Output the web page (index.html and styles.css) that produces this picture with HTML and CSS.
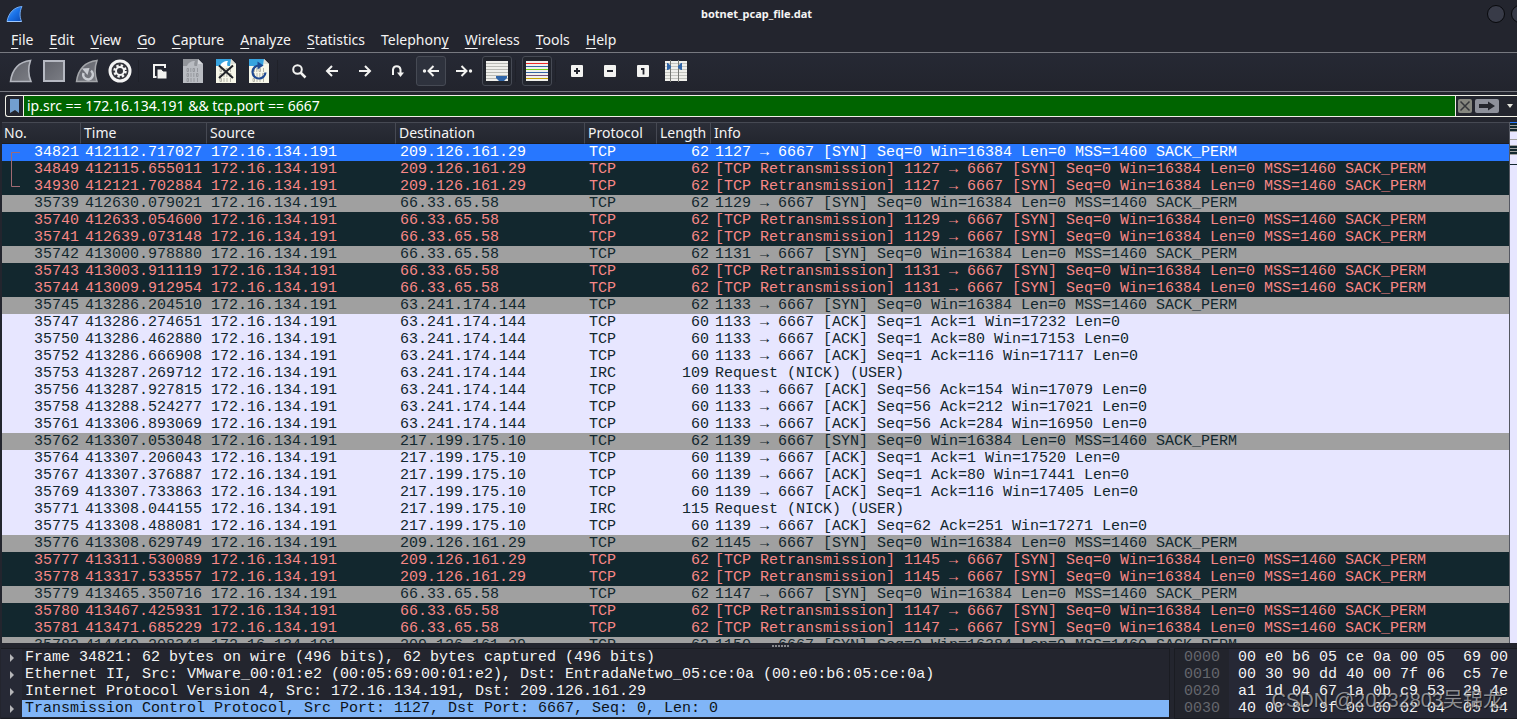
FILE: index.html
```html
<!DOCTYPE html>
<html lang="en">
<head>
<meta charset="utf-8">
<title>botnet_pcap_file.dat</title>
<link rel="stylesheet" href="styles.css">
</head>
<body>
<svg width="0" height="0" class="defs" aria-hidden="true">
  <defs>
    <linearGradient id="fin-blue" x1="0" y1="0" x2="1" y2="1"><stop offset="0" stop-color="#5aa8f5"/><stop offset=".5" stop-color="#1a72e8"/><stop offset="1" stop-color="#0a49b4"/></linearGradient>
    <linearGradient id="steel" x1="0" y1="0" x2="1" y2="1"><stop offset="0" stop-color="#60626a"/><stop offset="1" stop-color="#7b7d84"/></linearGradient>
    <symbol id="bits" viewBox="0 0 24 24">
      <g fill="none" stroke-width=".8">
        <path d="M6 9.500h1.500v3H6zM12 9.500h1.500v3H12zM9.800 9v4M16.500 9v4M6 14.500h1.500v3H6zM15.500 14.500H17v3h-1.500zM10 14v4M12.800 14v4M6 19.500h1.500v3H6zM10 19v4M13 19v4M16.500 19v4"/>
      </g>
    </symbol>
  </defs>
</svg>
<div class="window">
  <header class="titlebar">
    <svg class="logo" viewBox="0 0 18 18"><path d="M1 16.500C2.500 8 8 2 16 1.500c-2.500 5-2.500 10-.5 15z" fill="url(#fin-blue)" stroke="#73a9ee"/><path d="M1 16.500h14.500" stroke="#9ec8ff"/></svg>
    <h1 class="title">botnet_pcap_file.dat</h1>
    <div class="window-buttons"><button aria-label="Minimize"></button><button aria-label="Maximize"></button></div>
  </header>

  <nav class="menubar">
    <button><u>F</u>ile</button><button><u>E</u>dit</button><button><u>V</u>iew</button><button><u>G</u>o</button><button><u>C</u>apture</button><button><u>A</u>nalyze</button><button><u>S</u>tatistics</button><button>Telephon<u>y</u></button><button><u>W</u>ireless</button><button><u>T</u>ools</button><button><u>H</u>elp</button>
  </nav>

  <div class="toolbar">
    <button aria-label="Start capture"><svg viewBox="0 0 24 24"><path d="M1.500 22.500C3 11 9.500 3 21.500 1.500c-2.500 7-2.500 14 .5 21z" fill="url(#steel)" stroke="#b4b7bf" stroke-width="1.600"/></svg></button>
    <button aria-label="Stop capture"><svg viewBox="0 0 24 24"><path d="M2 2h20v20H2z" fill="url(#steel)" stroke="#b6b9c2" stroke-width="2"/></svg></button>
    <button aria-label="Restart capture"><svg viewBox="0 0 24 24"><path d="M1.500 22.500C3 11 9.500 3 22 1.500c-2.500 7-2.500 14 0 21z" fill="url(#steel)" stroke="#a4a6aa" stroke-width="1.500"/><path d="M8.500 14a4.800 4.800 0 1 0 7.500-2.200" fill="none" stroke="#c9ccd2" stroke-width="2.500"/><path d="M7 9.500l7.500-.5-2 7z" fill="#c9ccd2"/></svg></button>
    <button aria-label="Capture options"><svg viewBox="0 0 24 24"><circle cx="12" cy="12" r="10" fill="#33343b" stroke="#f4f4f4" stroke-width="3"/><circle cx="12" cy="12" r="5.500" fill="none" stroke="#f4f4f4" stroke-width="2.500" stroke-dasharray="2.300 2.020"/><circle cx="12" cy="12" r="4" fill="none" stroke="#f4f4f4" stroke-width="2"/></svg></button>
    <span class="sep"></span>
    <button aria-label="Open file"><svg viewBox="0 0 24 24"><path d="M9 18H6V6h11v3" fill="none" stroke="#f3f3f1" stroke-width="2"/><path d="M9 10h4.500l1.500 2h4v8H9z" fill="#f3f3f1" stroke="#23252e"/></svg></button>
    <button aria-label="Save file"><svg viewBox="0 0 24 24"><path d="M2 0h15l5 5v19H2z" fill="#b9bcc2"/><path d="M2 0h15l-1 7H2z" fill="#92959b"/><path d="M6 7c1-3 4-5 8-5-1 2-1 3-.5 5z" fill="#b9bcc2"/><path d="M17 0v5h5z" fill="#d5d7dc"/><use href="#bits" stroke="#8d9096"/></svg></button>
    <button aria-label="Close file"><svg viewBox="0 0 24 24"><path d="M2 0h15l5 5v19H2z" fill="#f7f7e9"/><path d="M2 0h15l-1 7H2z" fill="#37a3df"/><path d="M6 7c1-3 4-5 8-5-1 2-1 3-.5 5z" fill="#fff"/><path d="M17 0v5h5z" fill="#deded5"/><use href="#bits" stroke="#a4a59a"/><path d="M5 6.500l14 12.500M19 6.500L5 19" stroke="#202328" stroke-width="2"/></svg></button>
    <button aria-label="Reload file"><svg viewBox="0 0 24 24"><path d="M2 0h15l5 5v19H2z" fill="#f7f7e9"/><path d="M2 0h15l-1 7H2z" fill="#37a3df"/><path d="M17 0v5h5z" fill="#deded5"/><use href="#bits" stroke="#a4a59a"/><path d="M12 6.500a6.500 6.500 0 1 0 6.500 7" fill="none" stroke="#1e4a94" stroke-width="2.200"/><path d="M10.500 2.500l6 4-6 4z" fill="#1e4a94"/></svg></button>
    <span class="sep"></span>
    <button aria-label="Find packet"><svg viewBox="0 0 24 24"><circle cx="10.500" cy="10.500" r="4.300" fill="none" stroke="#f3f3f1" stroke-width="2"/><path d="M13.500 13.500l5 5" stroke="#f3f3f1" stroke-width="2.500"/></svg></button>
    <button aria-label="Previous packet"><svg viewBox="0 0 24 24"><path d="M18 12H7.500M12 7l-5 5 5 5" class="line"/></svg></button>
    <button aria-label="Next packet"><svg viewBox="0 0 24 24"><path d="M6 12h10.500M12 7l5 5-5 5" class="line"/></svg></button>
    <button aria-label="Go to packet"><svg viewBox="0 0 24 24"><path d="M7 16v-5.500a3.800 3.800 0 0 1 7.500 0V15" class="line"/><path d="M11 13.500h7L14.500 18z" fill="#f3f3f1"/></svg></button>
    <button class="on" aria-label="First packet"><svg viewBox="0 0 24 24"><circle cx="5.500" cy="12" r="1.700" fill="#f3f3f1"/><path d="M20 12H10M14.500 7l-5 5 5 5" class="line"/></svg></button>
    <button aria-label="Last packet"><svg viewBox="0 0 24 24"><circle cx="18.500" cy="12" r="1.700" fill="#f3f3f1"/><path d="M4 12h10M9.500 7l5 5-5 5" class="line"/></svg></button>
    <button class="on dark" aria-label="Auto scroll"><svg viewBox="0 0 24 24"><path d="M1 2h22v20H1z" fill="#f0f0ec"/><path d="M1 4.500h22M1 7.500h22M1 10.500h22M1 13.500h22M1 16.500h22M1 19.500h22" stroke="#b9bab5"/><path d="M11 17h11v2l-3 3h-5l-3-3z" fill="#2f65a8"/></svg></button>
    <span class="sep"></span>
    <button class="on dark" aria-label="Colorize packets"><svg viewBox="0 0 24 24"><path d="M1 2h22v20H1z" fill="#f0f0ec"/><path d="M1 4.500h22" stroke="#ef2929"/><path d="M1 7.500h22" stroke="#3465a4"/><path d="M1 10.500h22" stroke="#73d216"/><path d="M1 13.500h22" stroke="#3465a4"/><path d="M1 16.500h22" stroke="#75507b"/><path d="M1 19.500h22" stroke="#c4a000"/></svg></button>
    <span class="sep"></span>
    <button aria-label="Zoom in"><svg viewBox="0 0 24 24"><rect x="6" y="6" width="12" height="12" rx="1" fill="#f3f3f1"/><path d="M12 9v6M9 12h6" stroke="#23252e" stroke-width="2"/></svg></button>
    <button aria-label="Zoom out"><svg viewBox="0 0 24 24"><rect x="6" y="6" width="12" height="12" rx="1" fill="#f3f3f1"/><path d="M9 12h6" stroke="#23252e" stroke-width="2"/></svg></button>
    <button aria-label="Normal size"><svg viewBox="0 0 24 24"><rect x="6" y="6" width="12" height="12" rx="1" fill="#f3f3f1"/><path d="M10 10h2.500v5.500" fill="none" stroke="#23252e" stroke-width="1.800"/></svg></button>
    <button aria-label="Resize columns"><svg viewBox="0 0 24 24"><path d="M1 2h22v20H1z" fill="#f0f0ec"/><path d="M1 4.500h22M1 7.500h22M1 10.500h22M1 13.500h22M1 16.500h22M1 19.500h22" stroke="#c3c4bf"/><path d="M6.500 1v22M14.500 1v22" stroke="#777974"/><path d="M3 4h1l3 3v2l-3 2H3zM18 4h-1l-3 3v2l3 2h1z" fill="#2f65a8"/></svg></button>
  </div>

  <form class="filter" onsubmit="return false">
    <button class="bookmark" type="button" aria-label="Bookmarks"><svg viewBox="0 0 17 20"><path d="M4 3h9v14l-4-3-5 3z" fill="#729fcf"/></svg></button>
    <input type="text" aria-label="Display filter" value="ip.src == 172.16.134.191 &amp;&amp; tcp.port == 6667">
    <button class="clear" type="button" aria-label="Clear filter"><svg viewBox="0 0 14 14"><path d="M2.500 2.500l9 9M11.500 2.500l-9 9" stroke="#35373b" stroke-width="1.500"/></svg></button>
    <button class="apply" type="submit" aria-label="Apply filter"><svg viewBox="0 0 24 14"><path d="M4 5h9V2.500L20 7l-7 4.500V9H4z" fill="#25272e"/></svg></button>
    <button class="drop" type="button" aria-label="Recent filters"><svg viewBox="0 0 10 6"><path d="M2 1h6L5 5z" fill="#e4e4dc"/></svg></button>
  </form>

  <main class="packets">
    <div class="list">
      <table>
        <colgroup><col class="c-no"><col class="c-time"><col class="c-addr"><col class="c-addr"><col class="c-proto"><col class="c-len"><col></colgroup>
        <thead><tr><th>No.</th><th>Time</th><th>Source</th><th>Destination</th><th>Protocol</th><th>Length</th><th>Info</th></tr></thead>
        <tbody id="rows"></tbody>
      </table>
      <svg class="related" viewBox="0 0 10 36"><path d="M9 .5H.5v34H9" fill="none" stroke="#a06a72"/></svg>
    </div>
    <div class="minimap"></div>
  </main>

  <div class="splitter"><span></span></div>

  <section class="bottom">
    <ul class="details">
      <li><button aria-label="Expand"></button><span>Frame 34821: 62 bytes on wire (496 bits), 62 bytes captured (496 bits)</span></li>
      <li><button aria-label="Expand"></button><span>Ethernet II, Src: VMware_00:01:e2 (00:05:69:00:01:e2), Dst: EntradaNetwo_05:ce:0a (00:e0:b6:05:ce:0a)</span></li>
      <li><button aria-label="Expand"></button><span>Internet Protocol Version 4, Src: 172.16.134.191, Dst: 209.126.161.29</span></li>
      <li class="current"><button aria-label="Expand"></button><span>Transmission Control Protocol, Src Port: 1127, Dst Port: 6667, Seq: 0, Len: 0</span></li>
    </ul>
    <div class="hex">
      <pre class="offsets">0000
0010
0020
0030</pre>
      <pre class="bytes">00 e0 b6 05 ce 0a 00 05  69 00
00 30 90 dd 40 00 7f 06  c5 7e
a1 1d 04 67 1a 0b c9 53  29 4e
40 00 8c 9f 00 00 02 04  05 b4</pre>
    </div>
  </section>
  <div class="watermark">CSDN @20232803吴锦龙</div>
</div>
<script src="script.js"></script>
</body>
</html>
```
FILE: styles.css
```css
* { box-sizing: border-box; }
body {
  margin: 0;
  background: #23252e;
  color: #f4f4f4;
  font: 14px/20px "Noto Sans", "Open Sans", sans-serif;
}
button { margin: 0; padding: 0; border: 0; background: none; color: inherit; font: inherit; }
svg { display: block; }
.defs { position: absolute; }
.window { position: relative; display: flex; flex-direction: column; height: 100vh; overflow: hidden; }

.titlebar { position: relative; display: flex; align-items: center; justify-content: center; height: 28px; flex: none; }
.logo { position: absolute; left: 6px; top: 5px; width: 18px; height: 18px; }
.title { margin: 0 4px 0 0; font-size: 11px; line-height: 16px; font-weight: 700; }
.window-buttons { position: absolute; right: -12px; top: 5px; display: flex; gap: 6px; }
.window-buttons button { width: 18px; height: 18px; border: 1px solid #08090c; border-radius: 50%; background: #383b48; }

.menubar { display: flex; flex: none; height: 25px; padding-left: 3px; border-bottom: 1px solid #777980; }
.menubar button { padding: 0 8px; height: 24px; line-height: 24px; }
.menubar u { text-underline-offset: 3px; text-decoration-thickness: 1px; }

.toolbar { display: flex; flex: none; align-items: center; gap: 3px; height: 39px; padding: 0 6px 2px; border-bottom: 1px solid #777980; background: linear-gradient(#262934, #22242d); }
.toolbar button { display: flex; align-items: center; justify-content: center; width: 30px; height: 30px; border: 1px solid transparent; border-radius: 3px; }
.toolbar button.on { border-color: #464a54; background: #2e323d; }
.toolbar button.dark { background: #22252d; }
.toolbar svg { flex: none; width: 24px; height: 24px; }
.toolbar .line { fill: none; stroke: #f3f3f1; stroke-width: 2; }
.sep { width: 4px; height: 22px; border-left: 1px solid #1f2129; }

.filter { display: flex; flex: none; align-items: center; height: 22px; margin: 3px 0 5px 5px; border: 1px solid #f0f0e6; border-right: 0; border-radius: 3px 0 0 3px; background: #23252e; }
.filter input { flex: 1; min-width: 0; height: 20px; padding: 0 3px; border: solid #f0f0e6; border-width: 0 1px; outline: 0; background: #006400; color: #fff; font: inherit; }
.bookmark svg { width: 17px; height: 20px; }
.clear { width: 14px; height: 14px; margin-left: 2px; border-radius: 2px; background: #86877f; }
.apply { width: 24px; height: 14px; margin-left: 3px; border-radius: 2px; background: #8e919b; }
.drop { width: 10px; margin: 0 2px 0 6px; }

.packets { display: flex; flex: 1; min-height: 0; padding-left: 2px; }
.list { position: relative; flex: 1; min-width: 0; overflow: hidden; }
table { width: 100%; table-layout: fixed; border-collapse: separate; border-spacing: 0; }
.c-no { width: 79px; }
.c-time { width: 126px; }
.c-addr { width: 189px; }
.c-proto { width: 72px; }
.c-len { width: 54px; }
th { height: 22px; padding: 0 0 0 3px; border-top: 1px solid #464953; border-right: 1px solid #464953; border-bottom: 1px solid #1b1d24; background: linear-gradient(#2b2e38, #23262e); font-weight: 400; text-align: left; line-height: 20px; overflow: hidden; white-space: nowrap; }
th:first-child { padding-left: 2px; }
th:last-child { border-right: 0; }
td { height: 17px; padding: 0 0 0 4px; font: 15px/17px "Liberation Mono", monospace; white-space: pre; overflow: hidden; }
td:nth-child(1), td:nth-child(6) { padding: 0 2px 0 0; text-align: right; }
.retrans td { background: #12272e; color: #f78787; }
.syn td { background: #a0a0a0; color: #12272e; }
.ok td { background: #e7e6ff; color: #12272e; }
.selected td { background: #2777ff; color: #fff; }
.related { position: absolute; left: 9px; top: 30px; width: 10px; height: 36px; }
.minimap {
  width: 8px; border-left: 1px solid #555862;
  background: linear-gradient(#2777ff 0 1px, #12272e 1px 3px, #a0a0a0 3px 4px, #12272e 4px 6px, #a0a0a0 6px 7px, #12272e 7px 9px, #a0a0a0 9px 10px, #e7e6ff 10px 17px, #a0a0a0 17px 18px, #e7e6ff 18px 23px, #a0a0a0 23px 24px, #12272e 24px 26px, #a0a0a0 26px 27px, #12272e 27px 29px, #a0a0a0 29px 30px, #12272e 30px 32px, #a0a0a0 32px 33px, #e7e6ff 33px 42px, #12272e 42px 43px, #e7e6ff 43px);
}

.splitter { display: flex; flex: none; justify-content: center; height: 5px; padding: 2px 0 0 44px; }
.splitter span { width: 17px; height: 2px; background: repeating-linear-gradient(90deg, #85878c 0 2px, transparent 2px 3px); }

.bottom { display: flex; flex: none; gap: 4px; padding-left: 1px; font: 15px/17px "Liberation Mono", monospace; }
.details { flex: 1; min-width: 0; margin: 0; padding: 0 0 1px; list-style: none; border: 1px solid #1a1c22; border-left: 0; }
.details li { display: flex; }
.details li > button { display: flex; align-items: center; width: 21px; height: 17px; padding-left: 9px; background: #262935; }
.details li > button::before { content: ""; border: solid transparent; border-width: 4px 0 4px 4px; border-left-color: #b5b6b9; }
.details span { flex: 1; padding-left: 3px; white-space: pre; overflow: hidden; }
.details .current span { background: #80b5f7; color: #0d1218; }
.hex { display: flex; width: 343px; border: 1px solid #1a1c22; border-right: 0; background: #262835; }
pre { margin: 0; font: inherit; }
.offsets { padding: 0 9px; background: #22242c; color: #65676d; }
.bytes { flex: 1; padding-left: 9px; overflow: hidden; }

.watermark { position: absolute; right: 14px; bottom: 7px; color: rgba(215, 215, 215, .62); font: 20px/24px "Liberation Sans", "Noto Sans CJK SC", sans-serif; text-shadow: 1px 1px 1px rgba(0, 0, 0, .5); pointer-events: none; }
```
FILE: script.js
```js
const hosts = { a: "209.126.161.29", b: "66.33.65.58", c: "63.241.174.144", d: "217.199.175.10" };
const SYN = "[SYN] Seq=0 Win=16384 Len=0 MSS=1460 SACK_PERM";

// Each packet: class, number, time, host key, source port, info (ACK text or IRC length)
const packets = [
  ["selected", 34821, "412112.717027", "a", 1127],
  ["retrans", 34849, "412115.655011", "a", 1127],
  ["retrans", 34930, "412121.702884", "a", 1127],
  ["syn", 35739, "412630.079021", "b", 1129],
  ["retrans", 35740, "412633.054600", "b", 1129],
  ["retrans", 35741, "412639.073148", "b", 1129],
  ["syn", 35742, "413000.978880", "b", 1131],
  ["retrans", 35743, "413003.911119", "b", 1131],
  ["retrans", 35744, "413009.912954", "b", 1131],
  ["syn", 35745, "413286.204510", "c", 1133],
  ["ok", 35747, "413286.274651", "c", 1133, "Seq=1 Ack=1 Win=17232"],
  ["ok", 35750, "413286.462880", "c", 1133, "Seq=1 Ack=80 Win=17153"],
  ["ok", 35752, "413286.666908", "c", 1133, "Seq=1 Ack=116 Win=17117"],
  ["ok", 35753, "413287.269712", "c", 1133, 109],
  ["ok", 35756, "413287.927815", "c", 1133, "Seq=56 Ack=154 Win=17079"],
  ["ok", 35758, "413288.524277", "c", 1133, "Seq=56 Ack=212 Win=17021"],
  ["ok", 35761, "413306.893069", "c", 1133, "Seq=56 Ack=284 Win=16950"],
  ["syn", 35762, "413307.053048", "d", 1139],
  ["ok", 35764, "413307.206043", "d", 1139, "Seq=1 Ack=1 Win=17520"],
  ["ok", 35767, "413307.376887", "d", 1139, "Seq=1 Ack=80 Win=17441"],
  ["ok", 35769, "413307.733863", "d", 1139, "Seq=1 Ack=116 Win=17405"],
  ["ok", 35771, "413308.044155", "d", 1139, 115],
  ["ok", 35775, "413308.488081", "d", 1139, "Seq=62 Ack=251 Win=17271"],
  ["syn", 35776, "413308.629749", "a", 1145],
  ["retrans", 35777, "413311.530089", "a", 1145],
  ["retrans", 35778, "413317.533557", "a", 1145],
  ["syn", 35779, "413465.350716", "b", 1147],
  ["retrans", 35780, "413467.425931", "b", 1147],
  ["retrans", 35781, "413471.685229", "b", 1147],
  ["syn", 35782, "414410.208341", "a", 1150]
];

const body = document.getElementById("rows");
for (const [kind, no, time, host, port, extra] of packets) {
  const irc = typeof extra === "number";
  const flow = `${port} → 6667 `;
  let info = flow + SYN;
  if (kind === "retrans") info = "[TCP Retransmission] " + info;
  if (kind === "ok") info = irc ? "Request (NICK) (USER)" : `${flow}[ACK] ${extra} Len=0`;
  const row = body.insertRow();
  row.className = kind;
  const length = irc ? extra : kind === "ok" ? 60 : 62;
  for (const value of [no, time, "172.16.134.191", hosts[host], irc ? "IRC" : "TCP", length, info]) {
    row.insertCell().textContent = value;
  }
}
```
